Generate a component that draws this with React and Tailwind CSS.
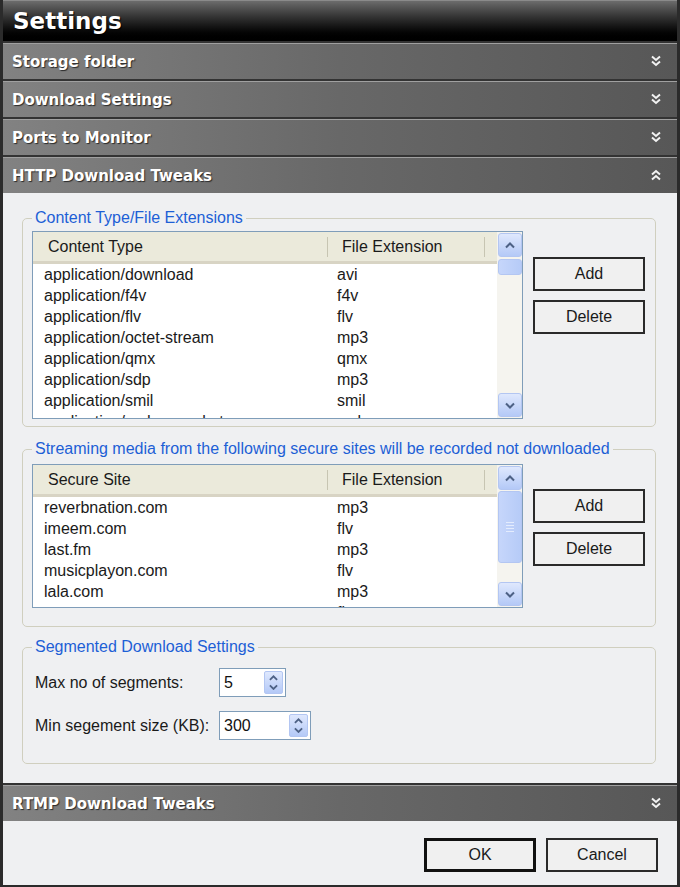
import React from 'react';

const contentTypes = [
  ['application/download', 'avi'],
  ['application/f4v', 'f4v'],
  ['application/flv', 'flv'],
  ['application/octet-stream', 'mp3'],
  ['application/qmx', 'qmx'],
  ['application/sdp', 'mp3'],
  ['application/smil', 'smil'],
  ['application/vnd.ms-wpl-stream', 'wpl'],
];

const secureSites = [
  ['reverbnation.com', 'mp3'],
  ['imeem.com', 'flv'],
  ['last.fm', 'mp3'],
  ['musicplayon.com', 'flv'],
  ['lala.com', 'mp3'],
  ['myspace.com', 'flv'],
];

const Chevrons = ({ up }) => (
  <svg width="12" height="12" viewBox="0 0 12 12" className={up ? 'rotate-180' : ''}>
    <path d="M2 1.5 L6 5 L10 1.5 M2 6.5 L6 10 L10 6.5" fill="none" stroke="#f2f2f2" strokeWidth="2" />
  </svg>
);

const SectionHeader = ({ title, open }) => (
  <div className="h-[38px] shrink-0 flex items-center justify-between pl-[9px] pr-[15px] border-t-2 border-[#333] bg-linear-to-r from-[#828282] via-[#686868] to-[#575757] shadow-[inset_0_1px_0_#a0a0a0]">
    <span className="text-white font-bold text-[15px] pt-[2px] [text-shadow:1px_1px_1px_#2a2a2a]" style={{ fontFamily: '"DejaVu Sans", Verdana, sans-serif' }}>
      {title}
    </span>
    <Chevrons up={open} />
  </div>
);

const Arrow = ({ up, size = 10 }) => (
  <svg width={size} height={size * 0.7} viewBox="0 0 10 7">
    <path d={up ? 'M1 5.5 L5 1.5 L9 5.5' : 'M1 1.5 L5 5.5 L9 1.5'} fill="none" stroke="#4d6185" strokeWidth="2" />
  </svg>
);

const ScrollBtn = ({ up }) => (
  <div className="h-[24px] w-[24px] shrink-0 flex items-center justify-center rounded-[3px] border border-[#b3c6f2] bg-linear-to-b from-[#dfe8fd] to-[#b4c9f7]">
    <Arrow up={up} />
  </div>
);

const Scrollbar = ({ thumbTop, thumbHeight, grip }) => (
  <div className="w-[25px] shrink-0 flex flex-col bg-[#f5f4ef] pl-px py-px">
    <ScrollBtn up />
    <div className="flex-1 relative">
      <div
        className="absolute left-0 w-[24px] rounded-[3px] border border-[#b3c6f2] bg-linear-to-r from-[#c6d6fb] to-[#b6cbf7] flex flex-col items-center justify-center gap-[2px]"
        style={{ top: thumbTop, height: thumbHeight }}
      >
        {grip && (
          <>
            <div className="w-[8px] h-px bg-[#e4ecfd]" />
            <div className="w-[8px] h-px bg-[#e4ecfd]" />
            <div className="w-[8px] h-px bg-[#e4ecfd]" />
            <div className="w-[8px] h-px bg-[#e4ecfd]" />
          </>
        )}
      </div>
    </div>
    <ScrollBtn />
  </div>
);

const ListView = ({ col1, rows, height, thumbTop, thumbHeight, grip }) => (
  <div className="w-[491px] flex border border-[#7f9db9] bg-white" style={{ height }}>
    <div className="flex-1 flex flex-col overflow-hidden">
      <div className="h-[32px] shrink-0 flex items-center bg-[#ebeadb] border-b-[3px] border-[#d8d4c4] text-[16px] text-[#1a1a1a]">
        <div className="w-[294px] pl-[15px] h-full flex items-center">{col1}</div>
        <div className="w-px h-[20px] bg-[#c7c5b2]" />
        <div className="w-[156px] pl-[14px] flex items-center">File Extension</div>
        <div className="w-px h-[20px] bg-[#c7c5b2]" />
      </div>
      <div className="flex flex-col">
        {rows.map(([a, b]) => (
          <div key={a} className="h-[21px] shrink-0 flex items-center text-[16px] text-[#1a1a1a]">
            <div className="w-[294px] pl-[11px]">{a}</div>
            <div className="pl-[10px]">{b}</div>
          </div>
        ))}
      </div>
    </div>
    <Scrollbar thumbTop={thumbTop} thumbHeight={thumbHeight} grip={grip} />
  </div>
);

const Btn = ({ children, thick }) => (
  <button
    className={`w-[112px] h-[34px] bg-[#f0f0f0] text-[16px] text-[#1a1a1a] ${thick ? 'border-[3px] border-[#111]' : 'border-2 border-[#2a2a2a]'}`}
  >
    {children}
  </button>
);

const Group = ({ legend, className, children }) => (
  <fieldset className={`mx-[19px] w-[634px] border border-[#d0cfbf] rounded-[5px] pl-[9px] ${className}`}>
    <legend className="px-[3px] text-[16px] leading-[16px] text-[#1d5fd6]">{legend}</legend>
    {children}
  </fieldset>
);

const Spinner = ({ value, width }) => (
  <div className="h-[29px] flex items-center justify-between border border-[#7f9db9] bg-white pl-[4px] pr-[2px]" style={{ width }}>
    <span className="text-[16px] text-[#111]">{value}</span>
    <div className="w-[19px] h-[23px] rounded-[2px] border border-[#b3c6f2] bg-linear-to-b from-[#dfe8fd] to-[#b4c9f7] flex flex-col items-center justify-center gap-[3px]">
      <Arrow up size={9} />
      <Arrow size={9} />
    </div>
  </div>
);

export default function App() {
  return (
    <div
      className="w-[680px] h-[887px] flex flex-col bg-[#2b2b2b] border-l-[3px] border-r-[3px] border-b-2 border-[#2b2b2b]"
      style={{ fontFamily: '"Liberation Sans", Arial, sans-serif' }}
    >
      <div className="h-[41px] shrink-0 flex items-center pl-[10px] border-t border-[#8a8a8a] bg-linear-to-b from-[#6c6c6c] via-[#262626] to-[#000]">
        <span className="text-white font-bold text-[23px] [text-shadow:1px_1px_1px_#000]" style={{ fontFamily: '"DejaVu Sans", Verdana, sans-serif' }}>
          Settings
        </span>
      </div>
      <SectionHeader title="Storage folder" />
      <SectionHeader title="Download Settings" />
      <SectionHeader title="Ports to Monitor" />
      <SectionHeader title="HTTP Download Tweaks" open />

      <div className="flex-1 bg-[#eff0f2] flex flex-col">
        <Group legend="Content Type/File Extensions" className="mt-[17px] pt-[5px] pb-[7px]">
          <div className="flex gap-[10px]">
            <ListView col1="Content Type" rows={contentTypes} height={188} thumbTop={2} thumbHeight={16} />
            <div className="flex flex-col gap-[9px] pt-[26px]">
              <Btn>Add</Btn>
              <Btn>Delete</Btn>
            </div>
          </div>
        </Group>

        <Group legend="Streaming media from the following secure sites will be recorded not downloaded" className="mt-[14px] pt-[7px] pb-[18px]">
          <div className="flex gap-[10px]">
            <ListView col1="Secure Site" rows={secureSites} height={144} thumbTop={1} thumbHeight={72} grip />
            <div className="flex flex-col gap-[9px] pt-[25px]">
              <Btn>Add</Btn>
              <Btn>Delete</Btn>
            </div>
          </div>
        </Group>

        <Group legend="Segmented Download Settings" className="mt-[12px] pt-[13px] pb-[23px]">
          <div className="flex flex-col gap-[14px] pl-[3px] text-[16px] text-[#1a1a1a]">
            <div className="flex items-center">
              <span className="w-[184px]">Max no of segments:</span>
              <Spinner value="5" width={67} />
            </div>
            <div className="flex items-center">
              <span className="w-[184px]">Min segement size (KB):</span>
              <Spinner value="300" width={92} />
            </div>
          </div>
        </Group>
      </div>

      <SectionHeader title="RTMP Download Tweaks" />
      <div className="h-[64px] shrink-0 bg-[#eff0f2] flex justify-end items-start gap-[10px] pt-[17px] pr-[19px]">
        <Btn thick>OK</Btn>
        <Btn>Cancel</Btn>
      </div>
    </div>
  );
}
